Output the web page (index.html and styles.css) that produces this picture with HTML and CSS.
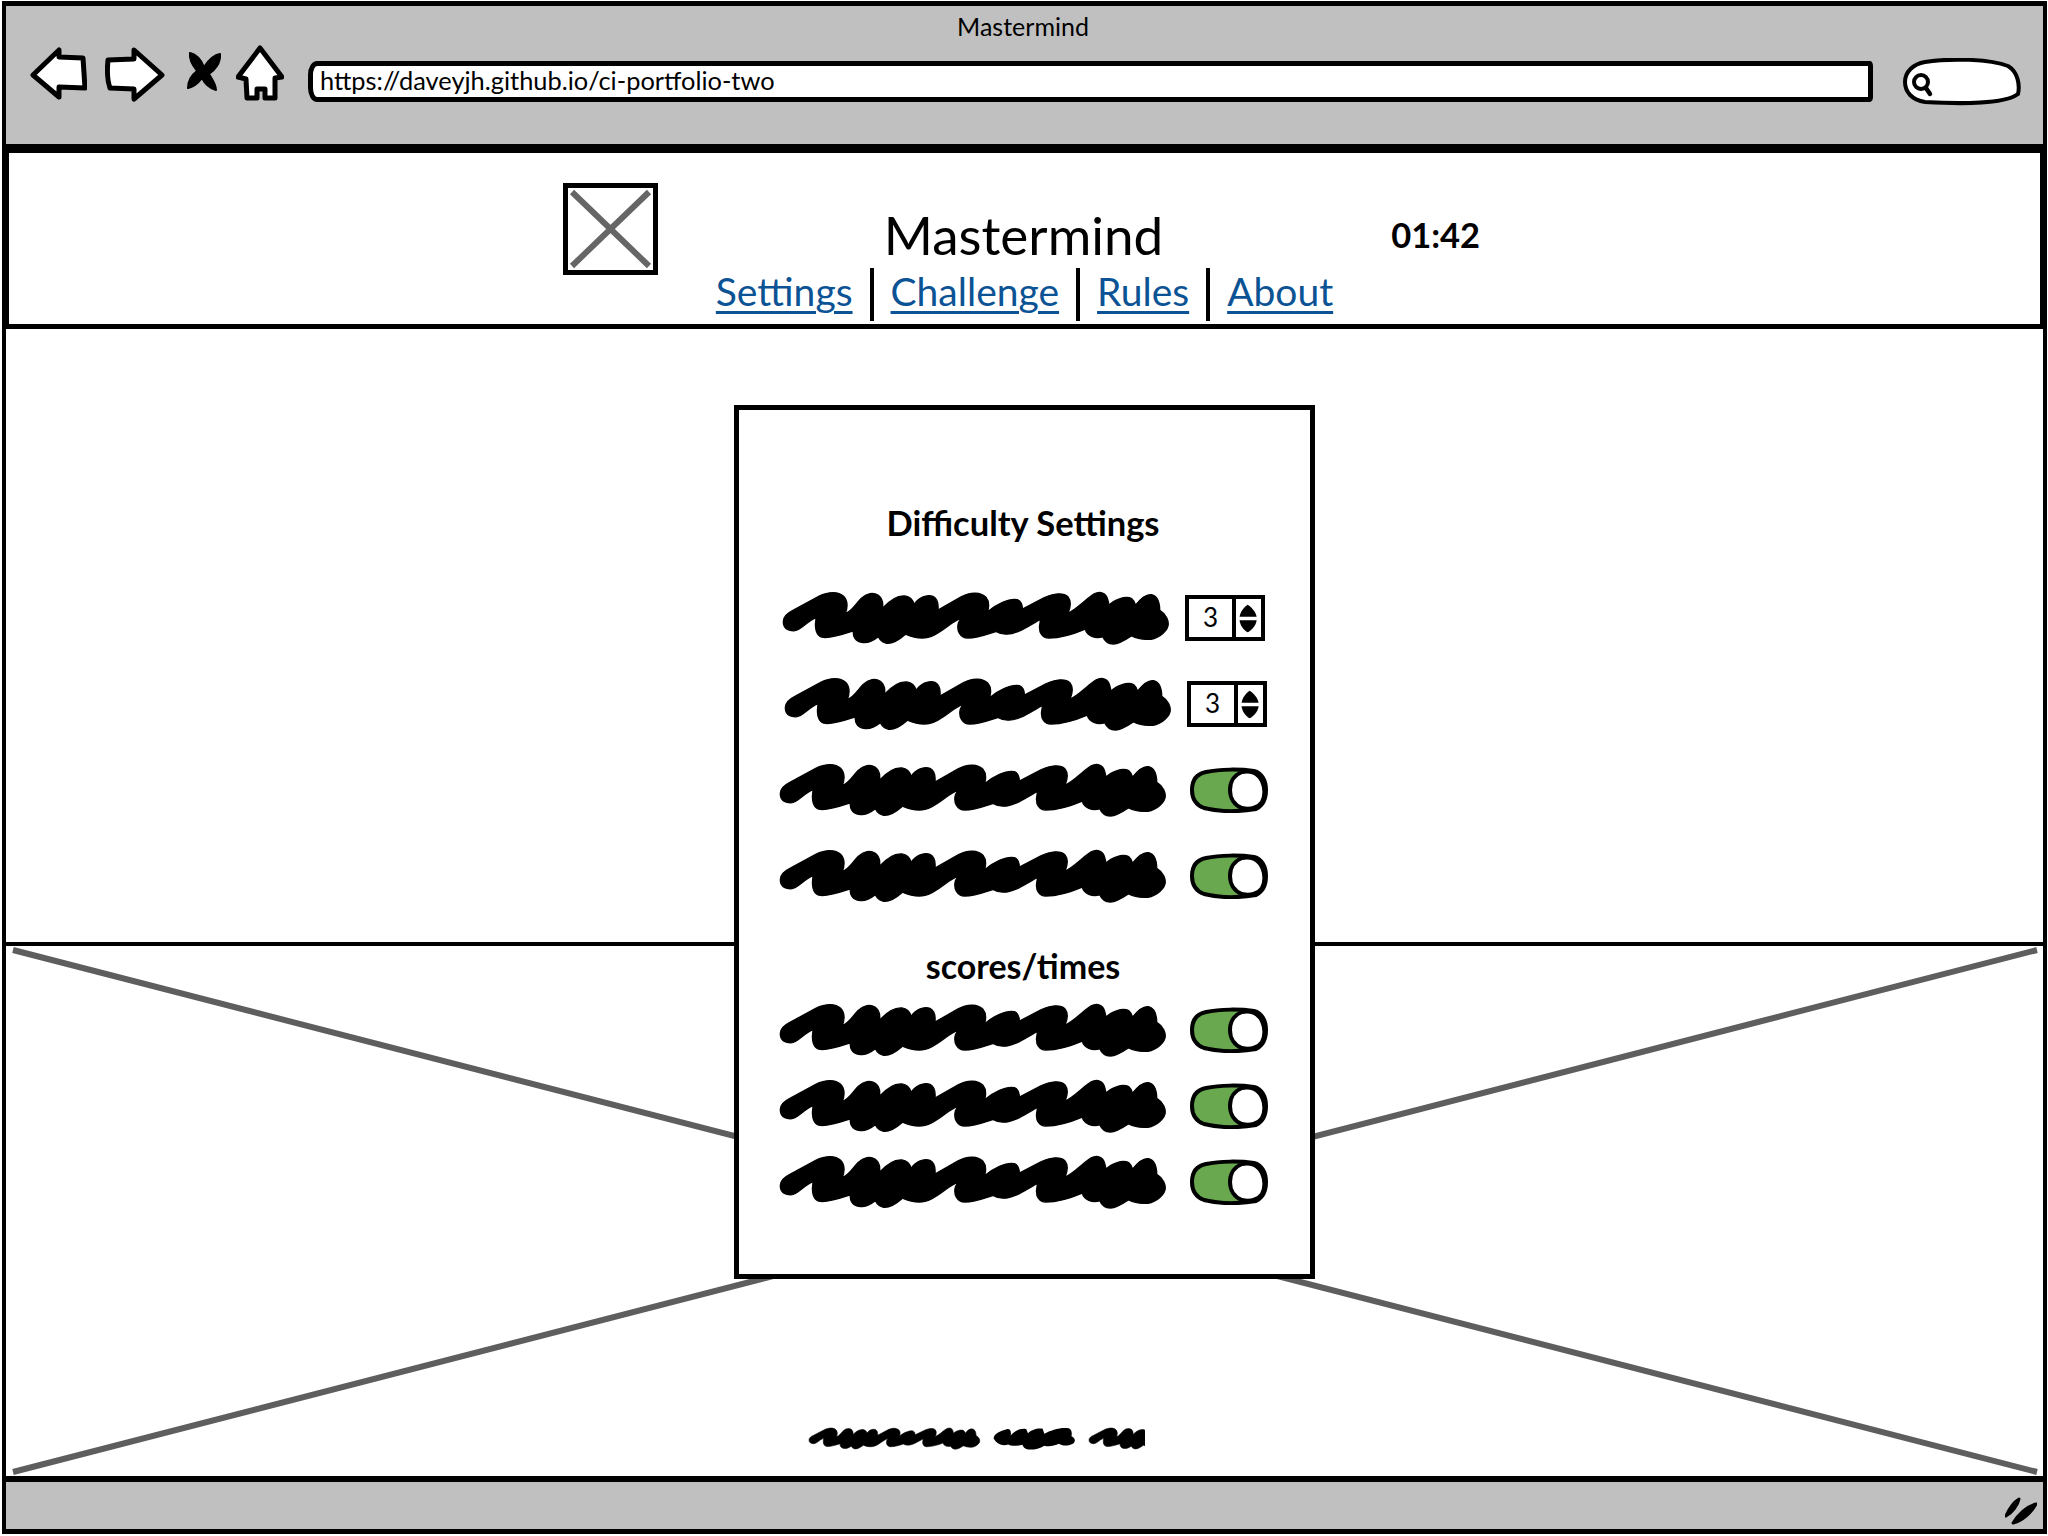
FILE: index.html
```html
<!DOCTYPE html>
<html lang="en">
<head>
<meta charset="utf-8">
<title>Mastermind</title>
<link rel="stylesheet" href="styles.css">
</head>
<body>
<svg class="defs" width="0" height="0" aria-hidden="true">
  <defs>
    <symbol id="scribble" viewBox="26 26 1178 170" preserveAspectRatio="none">
      <path d="M33 122C33 105 48 95 62 88L140 45C170 30 200 30 215 45C228 58 228 80 220 97C240 92 250 70 268 52C285 35 305 32 320 42C332 52 335 68 332 82C350 62 375 42 400 44C415 46 425 58 428 70C440 50 465 38 485 45C498 52 502 70 500 87L570 47C600 30 630 33 645 48C655 60 655 75 650 92C675 70 715 50 740 55C752 60 755 70 755 84L820 50C850 35 880 33 893 47C903 60 900 80 893 96C920 85 950 50 972 38C990 28 1008 35 1013 55L1017 72C1030 58 1065 42 1085 52C1092 58 1095 65 1097 72C1110 55 1125 38 1145 40C1165 45 1170 65 1170 88C1190 100 1198 120 1195 135C1190 155 1160 178 1130 176C1110 175 1095 170 1085 165C1070 175 1050 190 1030 190C1012 190 1003 180 998 168C975 175 950 165 945 145C910 160 870 172 835 172C815 172 805 155 807 135L810 115C780 130 740 162 705 160C690 160 680 155 675 152C650 160 620 172 590 172C568 172 555 150 562 125L570 112C540 120 510 160 470 170C445 175 425 170 402 160C385 175 365 190 345 188C335 186 325 178 320 168C305 180 285 188 270 185C250 182 242 165 245 150C215 160 180 172 155 170C135 168 130 150 130 130L132 110C105 120 85 150 65 150C45 150 33 140 33 122Z" stroke="#000" stroke-width="4" stroke-linejoin="round"/>
    </symbol>
    <symbol id="toggle" viewBox="0 0 78 46">
      <path class="toggle-track" d="M16 5C30 2 50 2 64 4C72 6 76 14 76 23C76 32 72 39 66 42C48 45 30 45 14 41C6 38 2 32 2 23C2 13 6 7 16 5Z"/>
      <path class="toggle-knob" d="M52 5C60 3 68 6 72 14C75 21 75 29 72 35C68 41 60 43 52 41C44 38 40 31 40 23C40 15 44 8 52 5Z"/>
    </symbol>
    <symbol id="updown" viewBox="0 0 28 38">
      <path d="M13 2C18 5 23 11 24 17H3C4 11 8 5 13 2Z"/>
      <path d="M3 21H24C23 28 18 33 13 36C8 33 4 28 3 21Z"/>
    </symbol>
  </defs>
</svg>

<div class="window">
  <div class="titlebar">
    <div class="window-title">Mastermind</div>
    <div class="toolbar">
      <svg class="icon icon-back" viewBox="29 45 58 60"><path class="outline" d="M33 75L59 50L59 57L83 58L85 88L59 87L59 97Z"/></svg>
      <svg class="icon icon-forward" viewBox="105 45 60 60"><path class="outline" d="M108 60L134 59L134 50L162 75L134 99L134 89L110 88C107 80 107 70 108 60Z"/></svg>
      <svg class="icon icon-stop" viewBox="186 45 36 50"><path class="stop-mark" d="M190 53C198 55 202 62 204 67C208 61 213 55 220 54C221 63 214 71 209 74C212 79 216 84 216 90C209 88 204 82 202 78C199 82 194 87 188 88C188 80 193 74 197 71C193 66 189 60 190 53Z"/></svg>
      <svg class="icon icon-home" viewBox="236 45 48 56"><path class="outline" d="M260 48L282 77L275 78L275 98L265 98L265 89L257 89L257 98L247 98L246 79L238 77Z"/></svg>
      <div class="url-bar">https://daveyjh.github.io/ci-portfolio-two</div>
      <svg class="icon icon-search" viewBox="1903 58 118 48">
        <path class="blob" d="M1925 62C1950 58 1990 59 2008 66C2018 72 2020 85 2018 94C2005 104 1960 104 1925 102C1912 100 1905 92 1905 82C1905 72 1913 64 1925 62Z"/>
        <circle class="lens" cx="1921" cy="82" r="7"/>
        <path class="lens-handle" d="M1926 88L1930 94"/>
      </svg>
    </div>
  </div>

  <header class="site-header">
    <div class="logo">
      <svg class="logo-x" viewBox="0 0 85 82"><path d="M4 4L81 78M81 4L4 78"/></svg>
    </div>
    <h1 class="site-title">Mastermind</h1>
    <div class="timer">01:42</div>
    <nav class="site-nav">
      <a href="#settings">Settings</a>
      <span class="nav-sep"></span>
      <a href="#challenge">Challenge</a>
      <span class="nav-sep"></span>
      <a href="#rules">Rules</a>
      <span class="nav-sep"></span>
      <a href="#about">About</a>
    </nav>
  </header>

  <main class="main-area"></main>

  <section class="hero">
    <svg class="hero-x" viewBox="0 0 2037 530" preserveAspectRatio="none"><path d="M7 4L2031 526M2031 4L7 526"/></svg>
    <div class="hero-caption">
      <svg class="word word-1"><use href="#scribble"/></svg>
      <svg class="word word-2" viewBox="638 78 254 74" preserveAspectRatio="none"><path d="M640 115C640 100 660 90 680 85C690 83 695 92 692 105C705 90 725 80 740 85L745 98C755 88 775 80 790 84L795 100C815 88 845 78 870 82C880 86 880 100 878 108C888 112 892 122 885 130C870 140 850 140 840 132C825 138 810 142 795 138C780 148 760 152 745 150C735 148 730 142 728 135C710 140 695 140 685 134C670 140 650 135 640 115Z"/></svg>
      <svg class="word word-3" viewBox="0 0 57 23"><use href="#scribble" width="173" height="23"/></svg>
    </div>
  </section>

  <div class="statusbar">
    <svg class="grip" viewBox="0 0 32 28"><path d="M1 19C4 12 9 5 14 2C13 8 7 16 1 19ZM8 26C13 18 22 9 31 7C27 15 17 24 8 26Z" stroke="#000" stroke-width="3" stroke-linejoin="round"/></svg>
  </div>

  <aside class="modal">
    <h2 class="modal-title">Difficulty Settings</h2>
    <div class="rows rows-wide">
      <div class="row row-a">
        <svg class="scribble"><use href="#scribble"/></svg>
        <div class="spinner"><span class="spinner-value">3</span><span class="spinner-arrows"><svg class="updown"><use href="#updown"/></svg></span></div>
      </div>
      <div class="row row-b">
        <svg class="scribble"><use href="#scribble"/></svg>
        <div class="spinner"><span class="spinner-value">3</span><span class="spinner-arrows"><svg class="updown"><use href="#updown"/></svg></span></div>
      </div>
      <div class="row">
        <svg class="scribble"><use href="#scribble"/></svg>
        <svg class="toggle"><use href="#toggle"/></svg>
      </div>
      <div class="row">
        <svg class="scribble"><use href="#scribble"/></svg>
        <svg class="toggle"><use href="#toggle"/></svg>
      </div>
    </div>
    <h3 class="modal-subtitle">scores/times</h3>
    <div class="rows rows-tight">
      <div class="row">
        <svg class="scribble"><use href="#scribble"/></svg>
        <svg class="toggle"><use href="#toggle"/></svg>
      </div>
      <div class="row">
        <svg class="scribble"><use href="#scribble"/></svg>
        <svg class="toggle"><use href="#toggle"/></svg>
      </div>
      <div class="row">
        <svg class="scribble"><use href="#scribble"/></svg>
        <svg class="toggle"><use href="#toggle"/></svg>
      </div>
    </div>
  </aside>
</div>
</body>
</html>
```

FILE: styles.css
```css
* { box-sizing: border-box; }

html, body {
  margin: 0;
  padding: 0;
  background: #fff;
}

body {
  font-family: "Lato", "Liberation Sans", sans-serif;
  color: #000;
  height: 1536px;
  overflow: hidden;
}

.defs { position: absolute; }

.window {
  position: relative;
  display: flex;
  flex-direction: column;
  width: 2045px;
  height: 1533px;
  margin: 1px 0 0 2px;
  border: 5px solid #000;
  border-left-width: 4px;
  border-right-width: 4px;
}

/* browser chrome */
.titlebar {
  flex: none;
  height: 142px;
  background: #c0c0c0;
  border-bottom: 4px solid #000;
}

.window-title {
  height: 39px;
  padding: 4px 3px 0 0;
  text-align: center;
  font-size: 25px;
  line-height: 32px;
}

.toolbar {
  display: flex;
  align-items: flex-start;
  padding-left: 23px;
}

.icon { display: block; flex: none; height: 60px; }
.outline { fill: #fff; stroke: #000; stroke-width: 5; stroke-linejoin: round; }
.stop-mark { stroke: #000; stroke-width: 2; stroke-linejoin: round; }
.icon-back { width: 58px; }
.icon-forward { width: 60px; margin-left: 18px; }
.icon-stop { width: 36px; height: 50px; margin-left: 21px; }
.icon-home { width: 48px; height: 56px; margin-left: 14px; }
.icon-search { width: 118px; height: 48px; margin: 13px 0 0 30px; }

.blob { fill: #fff; stroke: #000; stroke-width: 4; }
.lens { fill: #fff; stroke: #000; stroke-width: 4; }
.lens-handle { fill: none; stroke: #000; stroke-width: 4.5; stroke-linecap: round; }

.url-bar {
  flex: none;
  width: 1565px;
  height: 41px;
  margin: 16px 0 0 24px;
  padding-left: 7px;
  background: #fff;
  border: 5px solid #000;
  border-radius: 9px 3px 3px 9px / 14px 5px 5px 14px;
  font-size: 25.4px;
  line-height: 29px;
  white-space: nowrap;
}

/* site header */
.site-header {
  flex: none;
  display: grid;
  grid-template-columns: 1fr auto 1fr;
  grid-template-rows: 115px 53px;
  height: 181px;
  background: #fff;
  border: 5px solid #000;
  border-left-width: 3px;
  border-right-width: 3px;
}

.logo {
  grid-column: 1;
  grid-row: 1;
  justify-self: end;
  width: 95px;
  height: 92px;
  margin: 30px 226px 0 0;
  border: 5px solid #000;
}

.logo-x { display: block; width: 100%; height: 100%; }
.logo-x path { fill: none; stroke: #666; stroke-width: 6; }

.site-title {
  grid-column: 2;
  grid-row: 1;
  margin: 52px 0 0;
  padding-right: 2px;
  font-size: 53px;
  font-weight: 400;
  line-height: 60px;
}

.timer {
  grid-column: 3;
  grid-row: 1;
  margin: 52px 0 0 226px;
  font-size: 34.5px;
  font-weight: 700;
  line-height: 60px;
}

.site-nav {
  grid-column: 1 / -1;
  grid-row: 2;
  justify-self: center;
  display: flex;
  align-items: stretch;
  gap: 17px;
  font-size: 39px;
  line-height: 46px;
}

.site-nav a { color: #0b5394; text-decoration: underline; text-decoration-thickness: 3px; text-underline-offset: 5px; }
.nav-sep { width: 4px; background: #000; }

/* page body */
.main-area { flex: 1; min-height: 0; background: #fff; }

.hero {
  position: relative;
  flex: none;
  display: flex;
  align-items: flex-end;
  height: 540px;
  padding: 0 0 26px 802px;
  background: #fff;
  border-top: 4px solid #000;
  border-bottom: 6px solid #000;
}

.hero-x { position: absolute; top: 0; left: 0; width: 100%; height: 100%; }
.hero-x path { fill: none; stroke: #5e5e5e; stroke-width: 6; }

.hero-caption { position: relative; display: flex; gap: 12px; }
.word { display: block; height: 23px; }
.word-1 { width: 173px; }
.word-2 { width: 83px; }
.word-3 { width: 57px; }

.statusbar {
  flex: none;
  display: flex;
  align-items: flex-end;
  justify-content: flex-end;
  height: 47px;
  padding: 0 6px 4px 0;
  background: #c0c0c0;
}

.grip { display: block; width: 32px; height: 28px; }

/* settings dialog */
.modal {
  position: absolute;
  top: 399px;
  left: 728px;
  width: 581px;
  height: 874px;
  padding: 0 0 0 40px;
  background: #fff;
  border: 5px solid #000;
}

.modal-title,
.modal-subtitle {
  margin: 0;
  padding-right: 43px;
  text-align: center;
  font-weight: 700;
  font-size: 34.5px;
  line-height: 40px;
}

.modal-title { margin-top: 93px; }
.modal-subtitle { margin-top: 44px; font-size: 34px; }

.rows { display: flex; flex-direction: column; }
.rows-wide { gap: 34px; margin-top: 49px; }
.rows-tight { gap: 24px; margin-top: 18px; }

.row { display: flex; align-items: center; height: 52px; }
.row-a { margin-left: 3px; }
.row-b { margin-left: 5px; }

.scribble { display: block; flex: none; width: 390px; height: 56px; margin-left: -1px; }
.toggle { display: block; flex: none; width: 78px; height: 46px; margin-left: 22px; }
.toggle-track { fill: #6aa84f; stroke: #000; stroke-width: 4; }
.toggle-knob { fill: #fff; stroke: #000; stroke-width: 4; }

.spinner {
  flex: none;
  display: flex;
  width: 80px;
  height: 46px;
  margin-left: 14px;
  border: 4px solid #000;
}

.spinner-value {
  flex: 1;
  text-align: center;
  font-size: 26px;
  font-weight: 400;
  line-height: 36px;
}

.spinner-arrows {
  flex: none;
  display: flex;
  align-items: center;
  justify-content: center;
  width: 29px;
  border-left: 4px solid #000;
}

.updown { display: block; width: 23px; height: 31px; }
```
